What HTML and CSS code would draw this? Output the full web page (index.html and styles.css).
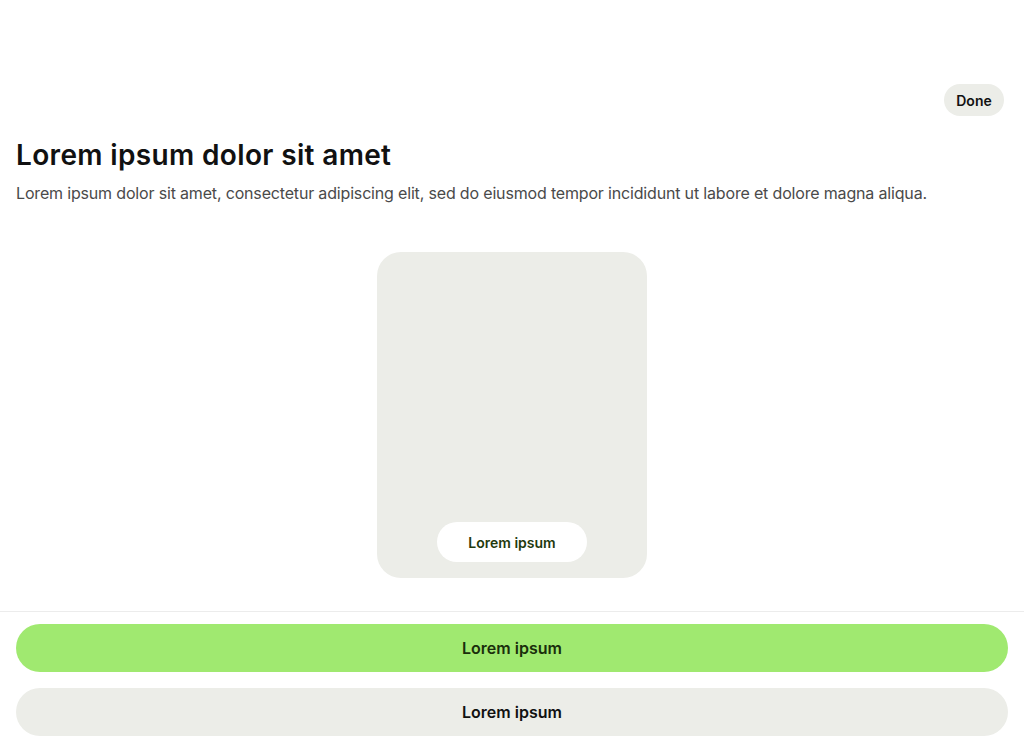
FILE: index.html
```html
<!DOCTYPE html>
<html lang="en">
<head>
<meta charset="utf-8">
<title>Lorem ipsum</title>
<link rel="stylesheet" href="styles.css">
</head>
<body>
<div class="page">
  <header class="topbar">
    <button class="done">Done</button>
  </header>
  <section class="intro">
    <h1 class="title">Lorem ipsum dolor sit amet</h1>
    <p class="subtitle">Lorem ipsum dolor sit amet, consectetur adipiscing elit, sed do eiusmod tempor incididunt ut labore et dolore magna aliqua.</p>
  </section>
  <main class="stage">
    <div class="card">
      <button class="card-btn">Lorem ipsum</button>
    </div>
  </main>
  <footer class="actions">
    <button class="btn btn-primary">Lorem ipsum</button>
    <button class="btn btn-secondary">Lorem ipsum</button>
  </footer>
</div>
</body>
</html>
```
FILE: styles.css
```css
* { box-sizing: border-box; }
html, body { margin: 0; padding: 0; background: #fff; }
body {
  font-family: Inter, "Noto Sans", sans-serif;
  color: #111;
  width: 1024px;
  height: 748px;
  overflow: hidden;
}
.page { display: flex; flex-direction: column; height: 748px; }
.topbar {
  display: flex;
  justify-content: flex-end;
  padding: 84px 20px 0 16px;
}
button { font-family: inherit; border: none; cursor: pointer; }
.done {
  height: 32px;
  width: 60px;
  border-radius: 16px;
  background: #ecede8;
  color: #111;
  font-size: 14px;
  font-weight: 600;
  padding: 0;
}
.intro { padding: 21px 16px 0; }
.title {
  margin: 0;
  font-size: 28px;
  font-weight: 600;
  line-height: 36px;
  letter-spacing: 0.35px;
  color: #111;
}
.subtitle {
  margin: 8px 0 0;
  font-size: 16px;
  line-height: 24px;
  letter-spacing: -0.17px;
  color: #4a4a4a;
}
.stage {
  display: flex;
  justify-content: center;
  padding-top: 47px;
}
.card {
  width: 270px;
  height: 326px;
  border-radius: 24px;
  background: #ecede8;
  display: flex;
  align-items: flex-end;
  justify-content: center;
  padding-bottom: 16px;
}
.card-btn {
  width: 150px;
  height: 40px;
  border-radius: 20px;
  background: #fff;
  color: #1f3a0e;
  font-size: 14px;
  font-weight: 600;
}
.actions {
  margin-top: 33px;
  border-top: 1px solid #ececec;
  padding: 12px 16px 0;
  display: flex;
  flex-direction: column;
  gap: 16px;
}
.btn {
  height: 48px;
  border-radius: 24px;
  font-size: 16px;
  font-weight: 600;
  width: 992px;
}
.btn-primary { background: #a0e970; color: #1a2e0c; }
.btn-secondary { background: #ecede8; color: #111; }
```
